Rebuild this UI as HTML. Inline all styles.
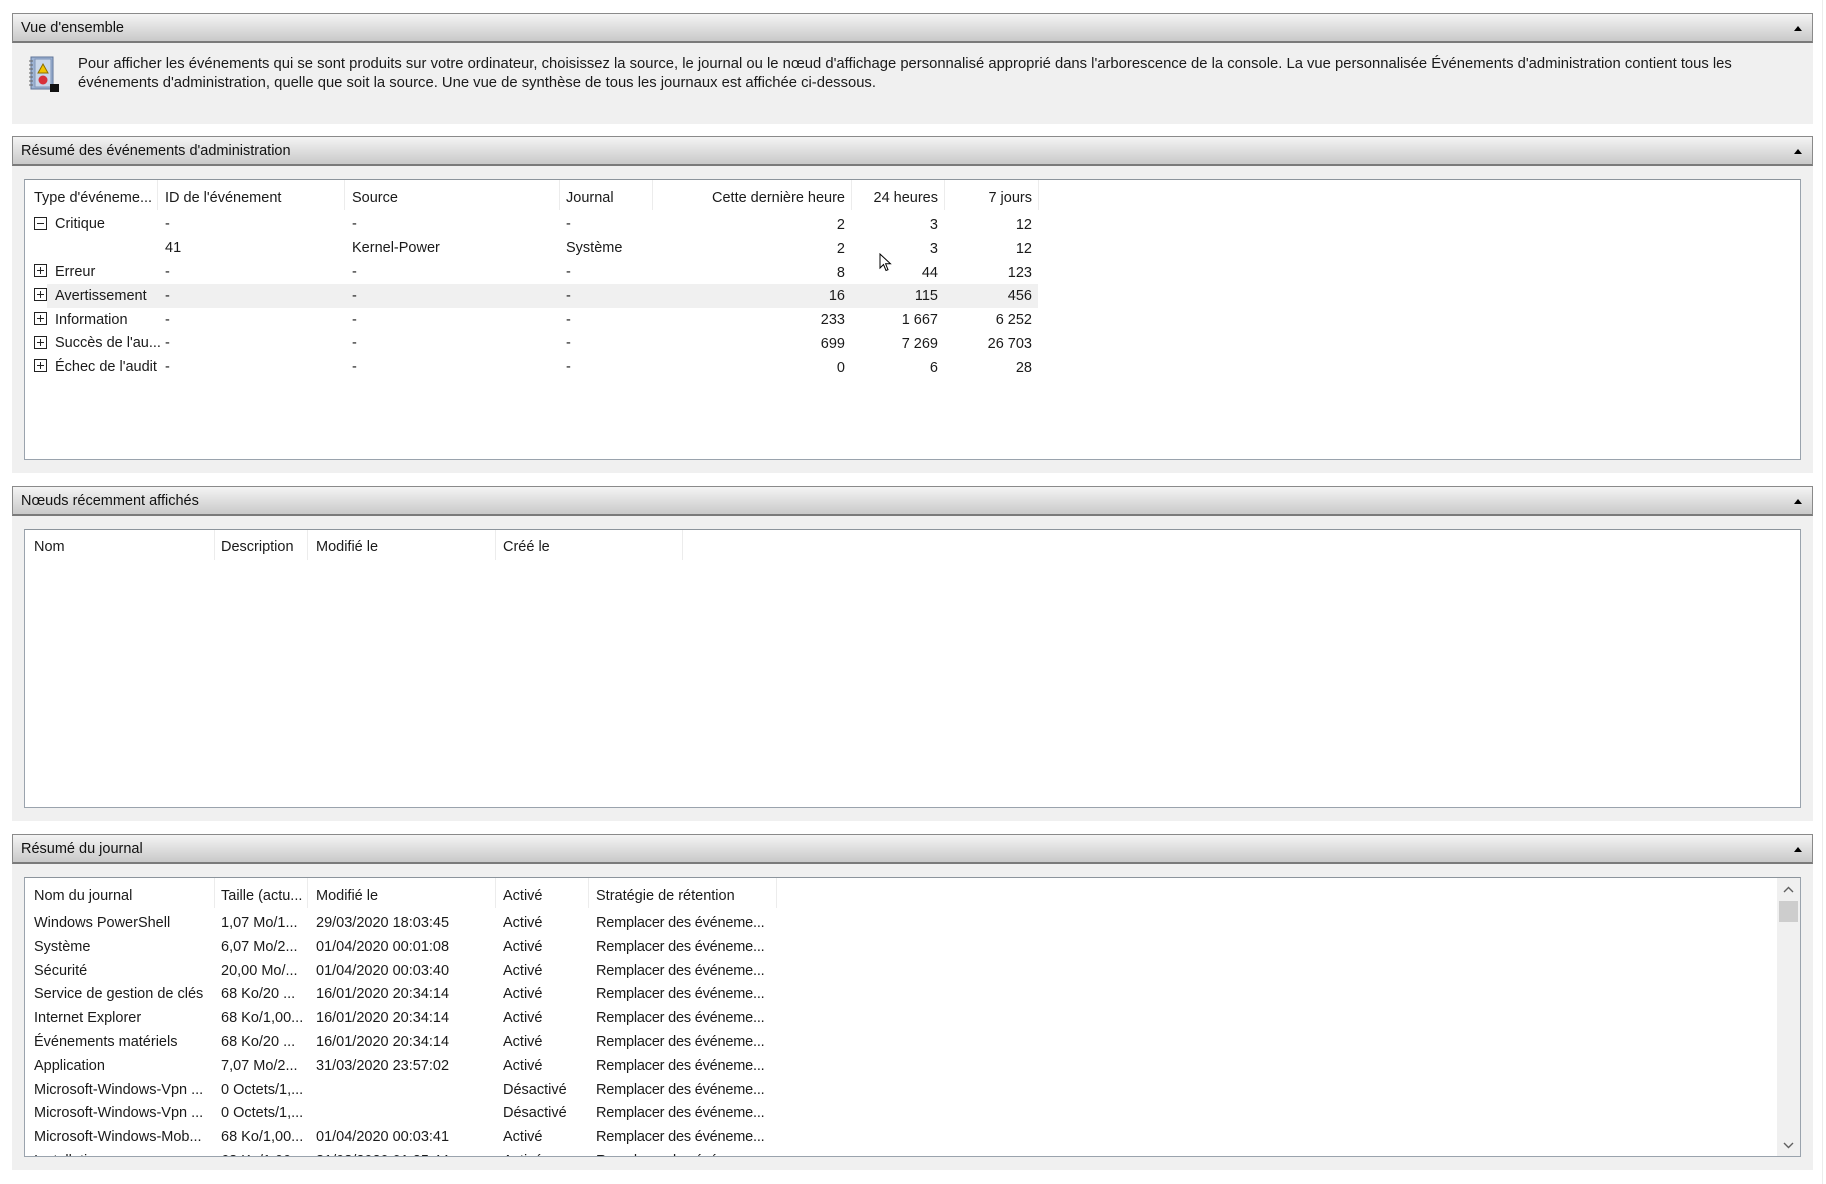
<!DOCTYPE html>
<html><head><meta charset="utf-8">
<style>
*{margin:0;padding:0;box-sizing:border-box}
body{width:1826px;height:1184px;background:#fff;position:relative;overflow:hidden;font-family:"Liberation Sans",sans-serif;font-size:14.5px;color:#1a1a1a}
.a{position:absolute;white-space:nowrap}
.panel{position:absolute;left:12px;width:1801px;background:#f0f0f0}
.hdr{position:absolute;left:12px;width:1801px;height:30px;background:linear-gradient(#f4f4f4,#c9c9c9);border:1px solid #8a8a8a;border-bottom:2px solid #7a7a7a}
.hdr span{position:absolute;left:8px;top:6px;font-size:14.5px;color:#111}
.hdr i{position:absolute;right:10px;top:12px;width:0;height:0;border-left:4px solid transparent;border-right:4px solid transparent;border-bottom:5px solid #000}
.box{position:absolute;left:24px;width:1777px;background:#fff;border:1px solid #9aa3ad;border-top-color:#8c949c}
.sep{position:absolute;width:1px;background:#ececec}
.r{text-align:right}
.pm{position:absolute;width:13px;height:13px;border:1px solid #222;background:#fff}
.pm:before{content:"";position:absolute;left:2px;top:5px;width:7px;height:1px;background:#222}
.pm.p:after{content:"";position:absolute;left:5px;top:2px;width:1px;height:7px;background:#222}
</style></head><body>
<div style="position:absolute;right:3px;top:0;width:1px;height:1184px;background:#ececec"></div>
<!-- Panel 1 -->
<div class="panel" style="top:13px;height:111px"></div>
<div class="hdr" style="top:13px"><span>Vue d'ensemble</span><i></i></div>
<svg class="a" style="left:27px;top:56px" width="37" height="38" viewBox="0 0 37 38">
<rect x="4" y="1" width="22" height="32" fill="#9db3d4" stroke="#5f7597"/>
<rect x="8" y="3" width="16" height="28" fill="#c8d6ea" stroke="#8196b8"/>
<g stroke="#666"><line x1="2" y1="5" x2="6" y2="5"/><line x1="2" y1="9" x2="6" y2="9"/><line x1="2" y1="13" x2="6" y2="13"/><line x1="2" y1="17" x2="6" y2="17"/><line x1="2" y1="21" x2="6" y2="21"/><line x1="2" y1="25" x2="6" y2="25"/><line x1="2" y1="29" x2="6" y2="29"/></g>
<polygon points="16,8 21,17 11,17" fill="#f2c400" stroke="#8a6d00"/>
<circle cx="16" cy="24" r="4.5" fill="#d8313b"/>
<rect x="23" y="28" width="9" height="8" fill="#111"/>
</svg>
<div class="a" style="left:78px;top:56px;font-size:14.8px">Pour afficher les événements qui se sont produits sur votre ordinateur, choisissez la source, le journal ou le nœud d'affichage personnalisé approprié dans l'arborescence de la console. La vue personnalisée Événements d'administration contient tous les</div>
<div class="a" style="left:78px;top:75px;font-size:14.8px">événements d'administration, quelle que soit la source. Une vue de synthèse de tous les journaux est affichée ci-dessous.</div>

<!-- Panel 2 -->
<div class="panel" style="top:136px;height:337px"></div>
<div class="hdr" style="top:136px"><span>Résumé des événements d'administration</span><i></i></div>
<div class="box" style="top:179px;height:281px">
<div class="sep" style="left:132px;top:0;height:30px"></div>
<div class="sep" style="left:319px;top:0;height:30px"></div>
<div class="sep" style="left:534px;top:0;height:30px"></div>
<div class="sep" style="left:627px;top:0;height:30px"></div>
<div class="sep" style="left:826px;top:0;height:30px"></div>
<div class="sep" style="left:919px;top:0;height:30px"></div>
<div class="sep" style="left:1013px;top:0;height:30px"></div>
<div style="position:absolute;left:22px;top:104px;width:991px;height:24px;background:#f0f0f0"></div>
</div>
<div class="a" style="left:34px;top:190px">Type d'événeme...</div>
<div class="a" style="left:165px;top:190px">ID de l'événement</div>
<div class="a" style="left:352px;top:190px">Source</div>
<div class="a" style="left:566px;top:190px">Journal</div>
<div class="a r" style="left:652px;width:193px;top:190px">Cette dernière heure</div>
<div class="a r" style="left:845px;width:93px;top:190px">24 heures</div>
<div class="a r" style="left:938px;width:94px;top:190px">7 jours</div>

<div class="pm" style="left:34px;top:217px"></div>
<div class="pm p" style="left:34px;top:264px"></div>
<div class="pm p" style="left:34px;top:288px"></div>
<div class="pm p" style="left:34px;top:312px"></div>
<div class="pm p" style="left:34px;top:336px"></div>
<div class="pm p" style="left:34px;top:359px"></div>

<div class="a" style="left:55px;top:216px">Critique</div><div class="a" style="left:165px;top:216px">-</div><div class="a" style="left:352px;top:216px">-</div><div class="a" style="left:566px;top:216px">-</div>
<div class="a" style="left:165px;top:240px">41</div><div class="a" style="left:352px;top:240px">Kernel-Power</div><div class="a" style="left:566px;top:240px">Système</div>
<div class="a" style="left:55px;top:264px">Erreur</div><div class="a" style="left:165px;top:264px">-</div><div class="a" style="left:352px;top:264px">-</div><div class="a" style="left:566px;top:264px">-</div>
<div class="a" style="left:55px;top:288px">Avertissement</div><div class="a" style="left:165px;top:288px">-</div><div class="a" style="left:352px;top:288px">-</div><div class="a" style="left:566px;top:288px">-</div>
<div class="a" style="left:55px;top:312px">Information</div><div class="a" style="left:165px;top:312px">-</div><div class="a" style="left:352px;top:312px">-</div><div class="a" style="left:566px;top:312px">-</div>
<div class="a" style="left:55px;top:335px">Succès de l'au...</div><div class="a" style="left:165px;top:335px">-</div><div class="a" style="left:352px;top:335px">-</div><div class="a" style="left:566px;top:335px">-</div>
<div class="a" style="left:55px;top:359px">Échec de l'audit</div><div class="a" style="left:165px;top:359px">-</div><div class="a" style="left:352px;top:359px">-</div><div class="a" style="left:566px;top:359px">-</div>

<div class="a r" style="left:745px;width:100px;top:214px;line-height:23.8px">2<br>2<br>8<br>16<br>233<br>699<br>0</div>
<div class="a r" style="left:838px;width:100px;top:214px;line-height:23.8px">3<br>3<br>44<br>115<br>1 667<br>7 269<br>6</div>
<div class="a r" style="left:932px;width:100px;top:214px;line-height:23.8px">12<br>12<br>123<br>456<br>6 252<br>26 703<br>28</div>
<svg class="a" style="left:879px;top:253px" width="13" height="20" viewBox="0 0 13 20"><path d="M1 1 L1 15 L4.5 11.5 L7 17.5 L9 16.7 L6.6 10.8 L11.5 10.8 Z" fill="#fff" stroke="#000" stroke-width="1"/></svg>

<!-- Panel 3 -->
<div class="panel" style="top:486px;height:335px"></div>
<div class="hdr" style="top:486px"><span>Nœuds récemment affichés</span><i></i></div>
<div class="box" style="top:529px;height:279px">
<div class="sep" style="left:189px;top:0;height:30px"></div>
<div class="sep" style="left:282px;top:0;height:30px"></div>
<div class="sep" style="left:470px;top:0;height:30px"></div>
<div class="sep" style="left:657px;top:0;height:30px"></div>
</div>
<div class="a" style="left:34px;top:539px">Nom</div>
<div class="a" style="left:221px;top:539px">Description</div>
<div class="a" style="left:316px;top:539px">Modifié le</div>
<div class="a" style="left:503px;top:539px">Créé le</div>

<!-- Panel 4 -->
<div class="panel" style="top:834px;height:336px"></div>
<div class="hdr" style="top:834px"><span>Résumé du journal</span><i></i></div>
<div class="box" style="top:877px;height:280px;overflow:hidden">
<div class="sep" style="left:189px;top:0;height:30px"></div>
<div class="sep" style="left:282px;top:0;height:30px"></div>
<div class="sep" style="left:470px;top:0;height:30px"></div>
<div class="sep" style="left:563px;top:0;height:30px"></div>
<div class="sep" style="left:751px;top:0;height:30px"></div>
<div style="position:absolute;left:1752px;top:0;width:23px;height:278px;background:#f0f0f0"></div>
<div style="position:absolute;left:1754px;top:23px;width:19px;height:21px;background:#cdcdcd"></div>
<svg style="position:absolute;left:1758px;top:8px" width="11" height="7"><path d="M1 6 L5.5 1.5 L10 6" fill="none" stroke="#606060" stroke-width="1.4"/></svg>
<svg style="position:absolute;left:1758px;top:264px" width="11" height="7"><path d="M1 1 L5.5 5.5 L10 1" fill="none" stroke="#606060" stroke-width="1.4"/></svg>
<div class="a" style="left:9px;top:10px">Nom du journal</div>
<div class="a" style="left:196px;top:10px">Taille (actu...</div>
<div class="a" style="left:291px;top:10px">Modifié le</div>
<div class="a" style="left:478px;top:10px">Activé</div>
<div class="a" style="left:571px;top:10px">Stratégie de rétention</div>
<div class="a" style="left:9px;top:34px;line-height:23.8px">Windows PowerShell<br>Système<br>Sécurité<br>Service de gestion de clés<br>Internet Explorer<br>Événements matériels<br>Application<br>Microsoft-Windows-Vpn ...<br>Microsoft-Windows-Vpn ...<br>Microsoft-Windows-Mob...<br>Installation</div>
<div class="a" style="left:196px;top:34px;line-height:23.8px">1,07 Mo/1...<br>6,07 Mo/2...<br>20,00 Mo/...<br>68 Ko/20 ...<br>68 Ko/1,00...<br>68 Ko/20 ...<br>7,07 Mo/2...<br>0 Octets/1,...<br>0 Octets/1,...<br>68 Ko/1,00...<br>68 Ko/1,00...</div>
<div class="a" style="left:291px;top:34px;line-height:23.8px">29/03/2020 18:03:45<br>01/04/2020 00:01:08<br>01/04/2020 00:03:40<br>16/01/2020 20:34:14<br>16/01/2020 20:34:14<br>16/01/2020 20:34:14<br>31/03/2020 23:57:02<br>&nbsp;<br>&nbsp;<br>01/04/2020 00:03:41<br>31/03/2020 01:25:44</div>
<div class="a" style="left:478px;top:34px;line-height:23.8px">Activé<br>Activé<br>Activé<br>Activé<br>Activé<br>Activé<br>Activé<br>Désactivé<br>Désactivé<br>Activé<br>Activé</div>
<div class="a" style="left:571px;top:34px;line-height:23.8px;letter-spacing:-0.2px">Remplacer des événeme...<br>Remplacer des événeme...<br>Remplacer des événeme...<br>Remplacer des événeme...<br>Remplacer des événeme...<br>Remplacer des événeme...<br>Remplacer des événeme...<br>Remplacer des événeme...<br>Remplacer des événeme...<br>Remplacer des événeme...<br>Remplacer des événeme...</div>
</div>
</body></html>
